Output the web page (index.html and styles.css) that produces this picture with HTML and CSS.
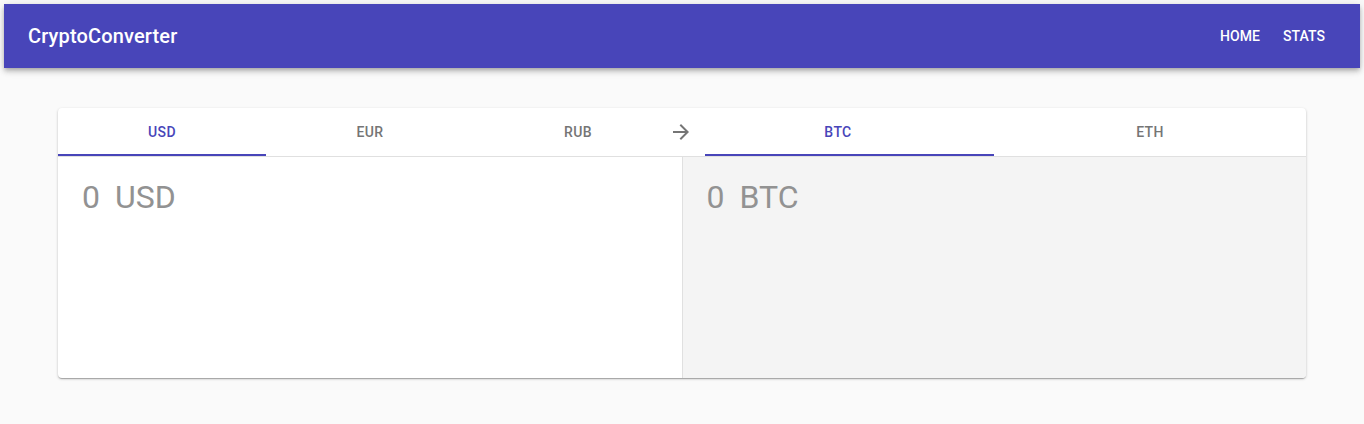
FILE: index.html
```html
<!DOCTYPE html>
<html>
<head>
<meta charset="utf-8">
<title>CryptoConverter</title>
<link rel="stylesheet" href="styles.css">
</head>
<body>
<header class="appbar">
  <div class="brand">CryptoConverter</div>
  <nav class="nav">
    <a class="nav-btn">HOME</a>
    <a class="nav-btn">STATS</a>
  </nav>
</header>
<main class="page">
  <section class="card">
    <div class="tabbar">
      <div class="tabs">
        <div class="tab active">USD</div>
        <div class="tab">EUR</div>
        <div class="tab">RUB</div>
      </div>
      <div class="tabs">
        <div class="tab active offset">BTC</div>
        <div class="tab">ETH</div>
      </div>
      <svg class="arrow" width="24" height="24" viewBox="0 0 24 24"><path d="M12 4l-1.41 1.41L16.17 11H4v2h12.17l-5.58 5.59L12 20l8-8z" fill="#757575"/></svg>
    </div>
    <div class="panels">
      <div class="panel from">
        <span class="amount">0</span><span class="unit">USD</span>
      </div>
      <div class="panel to">
        <span class="amount">0</span><span class="unit">BTC</span>
      </div>
    </div>
  </section>
</main>
</body>
</html>
```
FILE: styles.css
```css
* { box-sizing: border-box; }
html, body { height: 100%; }
body {
  margin: 0;
  padding: 4px;
  background: #fafafa;
  font-family: Roboto, "Liberation Sans", Arial, sans-serif;
}
.appbar {
  height: 64px;
  background: #4845b9;
  color: #fff;
  display: flex;
  align-items: center;
  justify-content: space-between;
  padding: 0 35px 0 24px;
  box-shadow: 0 2px 4px -1px rgba(0,0,0,.2), 0 4px 5px 0 rgba(0,0,0,.14), 0 1px 10px 0 rgba(0,0,0,.12);
}
.brand {
  font-size: 20px;
  font-weight: 500;
  letter-spacing: 0.0075em;
}
.nav { display: flex; gap: 23px; }
.nav-btn {
  font-size: 14px;
  font-weight: 500;
  letter-spacing: 0.005em;
  color: #fff;
}
.page {
  padding: 40px 54px;
}
.card {
  background: #fff;
  border-radius: 4px;
  overflow: hidden;
  box-shadow: 0 1px 3px 0 rgba(0,0,0,.2), 0 1px 1px 0 rgba(0,0,0,.14), 0 2px 1px -1px rgba(0,0,0,.12);
}
.tabbar {
  position: relative;
  display: flex;
  height: 49px;
  border-bottom: 1px solid #e0e0e0;
}
.tabs { flex: 1; display: flex; }
.tab {
  position: relative;
  flex: 1;
  height: 48px;
  display: flex;
  align-items: center;
  justify-content: center;
  font-size: 14px;
  font-weight: 500;
  letter-spacing: 0.02857em;
  color: #757575;
}
.tab.active { color: #4845b9; }
.tab.active::after {
  content: "";
  position: absolute;
  left: 0;
  right: 0;
  bottom: 0;
  height: 2px;
  background: #4845b9;
}
.tab.offset::after { left: 23px; }
.arrow {
  position: absolute;
  left: calc(50% - 13px);
  top: 12px;
}
.panels {
  display: flex;
  height: 221px;
}
.panel {
  flex: 1;
  padding: 21px 24px;
  display: flex;
  align-items: flex-start;
  gap: 15px;
  color: #929292;
  line-height: normal;
}
.panel.to {
  background: #f4f4f4;
  border-left: 1px solid #e0e0e0;
}
.amount, .unit { font-size: 32px; }
```
